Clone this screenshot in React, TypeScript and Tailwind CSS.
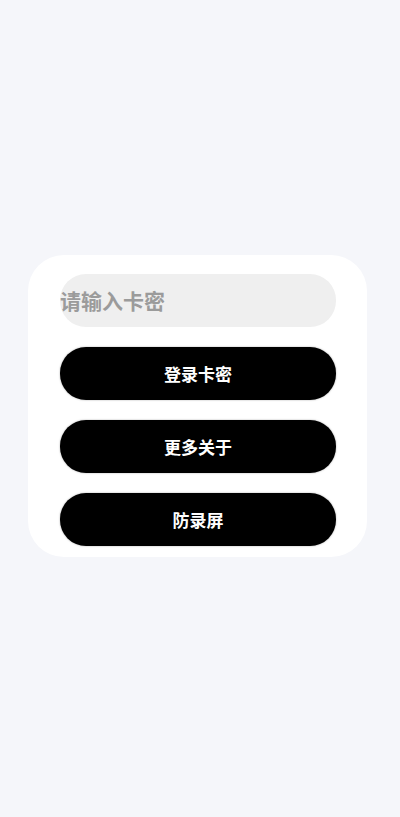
export default function App() {
  const actions = ["登录卡密", "更多关于", "防录屏"];

  return (
    <div
      className="min-h-screen w-full bg-[#f5f6fa] pt-[255px]"
      style={{ fontFamily: '"Noto Sans CJK SC", "Noto Sans", sans-serif' }}
    >
      <div className="ml-[28px] w-[339px] rounded-[36px] bg-white pl-[32px] pr-[31px] pt-[19px] pb-[11px]">
        <div className="flex h-[53px] items-center rounded-[26px] bg-[#efefef]">
          <span className="text-[21px] font-bold leading-none text-[#9b9b9b]">
            请输入卡密
          </span>
        </div>
        <div className="mt-[20px] flex flex-col gap-[20px]">
          {actions.map(label => (
            <button
              key={label}
              type="button"
              className="flex h-[53px] w-full items-center justify-center rounded-[26px] bg-black text-[17px] font-bold text-white shadow-[0_0_2px_rgba(0,0,0,0.35)]"
            >
              {label}
            </button>
          ))}
        </div>
      </div>
    </div>
  );
}
